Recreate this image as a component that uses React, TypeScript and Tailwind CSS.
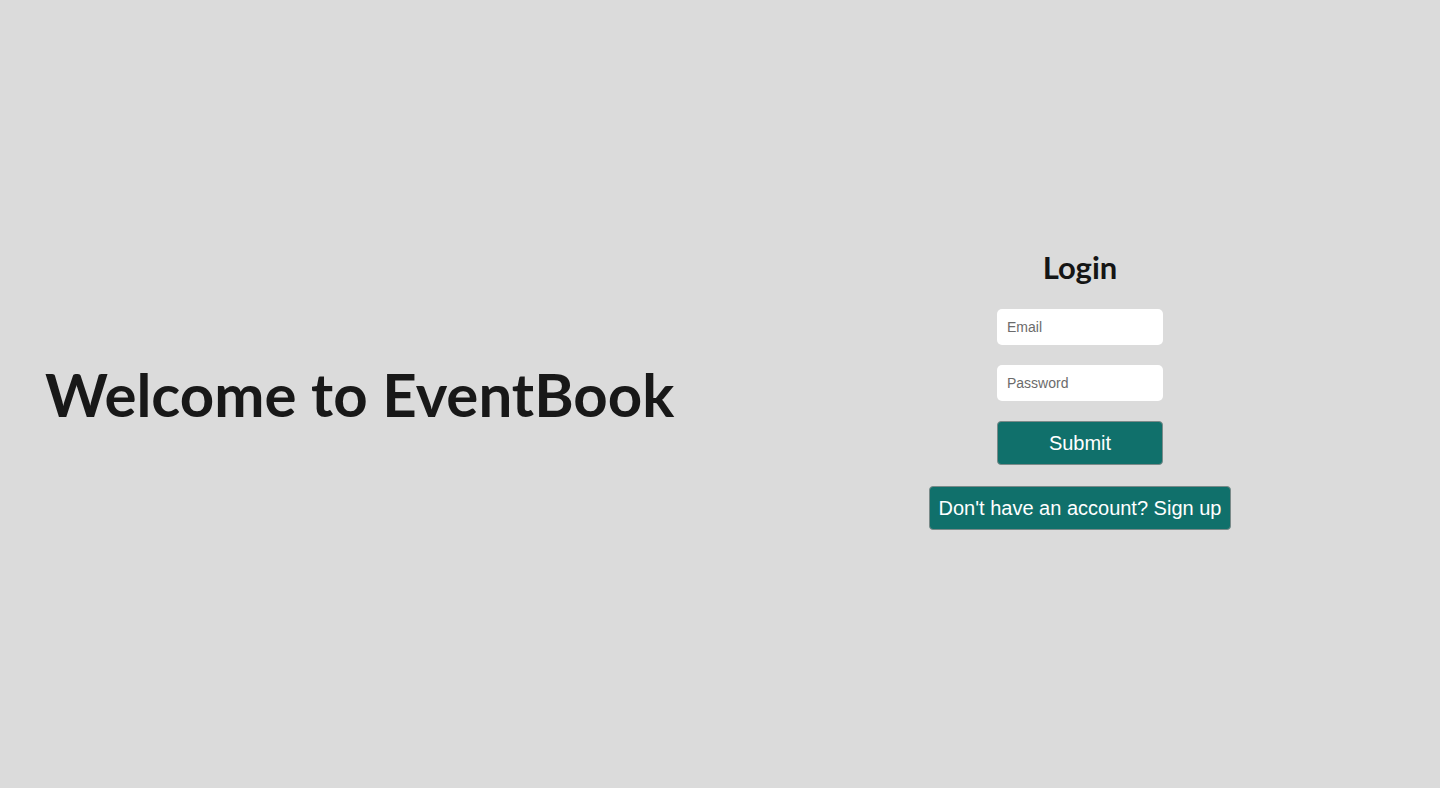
export default function App() {
  return (
    <div className="w-full h-screen bg-[#dbdbdb] flex items-center">
      <div className="w-1/2 flex items-center pl-[45px]">
        <h1 className="font-['Lato',sans-serif] text-[60px] font-bold text-[#181818] leading-none">
          Welcome to EventBook
        </h1>
      </div>
      <div className="w-1/2 flex flex-col items-center mb-[6px]">
        <h2 className="font-['Lato',sans-serif] text-[31px] font-bold text-[#151515] leading-none mb-[26px]">
          Login
        </h2>
        <input
          type="email"
          placeholder="Email"
          className="w-[166px] h-[36px] bg-white rounded-[5px] px-[10px] text-[14px] font-['Liberation_Sans',Arial,sans-serif] placeholder:text-[#6b6b6b] outline-none"
        />
        <input
          type="password"
          placeholder="Password"
          className="mt-[20px] w-[166px] h-[36px] bg-white rounded-[5px] px-[10px] text-[14px] font-['Liberation_Sans',Arial,sans-serif] placeholder:text-[#6b6b6b] outline-none"
        />
        <button className="mt-[20px] w-[166px] h-[44px] bg-[#10706b] border border-[#7a8a89] rounded-[4px] text-white text-[20px] font-['Liberation_Sans',Arial,sans-serif]">
          Submit
        </button>
        <button className="mt-[21px] h-[44px] px-[9px] bg-[#10706b] border border-[#7a8a89] rounded-[4px] text-white text-[20px] font-['Liberation_Sans',Arial,sans-serif]">
          Don't have an account? Sign up
        </button>
      </div>
    </div>
  );
}
